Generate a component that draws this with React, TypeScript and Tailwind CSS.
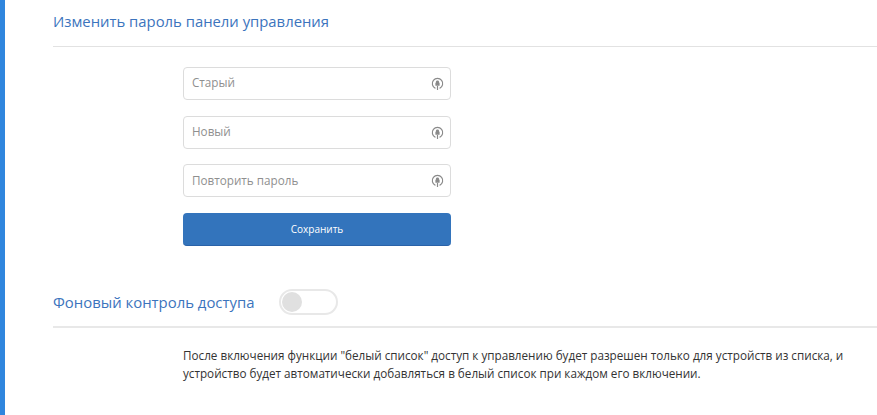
const fontFamily = "font-['Open_Sans','Noto_Sans',sans-serif]"

const LockIcon = () => (
  <svg className="h-[16px] w-[13px] text-[#8a8a8a]" viewBox="0 0 13 16" fill="none" aria-hidden>
    <path d="M4.4 12.4a5.2 5.2 0 1 1 4.2 0" stroke="currentColor" strokeWidth="1.2" />
    <path d="M6.5 4.6c-1 0-1.6.7-1.6 1.5v.7h-.5v3h4.2v-3h-.5v-.7c0-.8-.6-1.5-1.6-1.5z" fill="currentColor" />
    <path d="M6.5 10v4" stroke="currentColor" strokeWidth="1.2" />
  </svg>
)

const PasswordField = ({ placeholder, shift }: { placeholder: string; shift?: boolean }) => (
  <div className="flex h-[33px] w-[268px] items-center justify-between rounded-[4px] border border-[#dcdcdc] bg-white pr-[6px] pl-[8px]">
    <span className={shift ? 'text-[11.7px] text-[#8f8f8f]' : '-mt-[1px] text-[11.7px] text-[#8f8f8f]'}>{placeholder}</span>
    <LockIcon />
  </div>
)

export default function App() {
  return (
    <div className={`flex h-[415px] w-[877px] overflow-hidden bg-white ${fontFamily}`}>
      <div className="w-[5px] shrink-0 bg-[#2f86de]" />
      <div className="flex-1 pl-[48px]">
        <div className="h-[47px] border-b border-[#e2e2e2] pt-[10px]">
          <h2 className="text-[14.85px] leading-[22px] font-normal text-[#3c74bd]">Изменить пароль панели управления</h2>
        </div>

        <div className="mt-[20px] ml-[130px] flex w-[268px] flex-col">
          <PasswordField placeholder="Старый" />
          <div className="mt-[16px]">
            <PasswordField placeholder="Новый" />
          </div>
          <div className="mt-[15px]">
            <PasswordField placeholder="Повторить пароль" shift />
          </div>
          <button
            type="button"
            className="mt-[16px] h-[33px] w-[268px] rounded-[4px] border-b border-[#2a62a8] bg-[#3374bc] pt-[1px] text-[10px] font-normal text-white"
          >
            Сохранить
          </button>
        </div>

        <div className="mt-[43px] flex h-[39px] items-start border-b-2 border-[#e8e8e8]">
          <h2 className="mt-[1px] text-[14.9px] leading-[24px] font-normal text-[#3c74bd]">Фоновый контроль доступа</h2>
          <div className="ml-[25px] flex h-[26px] w-[59px] items-center rounded-full border-2 border-[#e8e8e8] bg-white pl-[1px]">
            <span className="h-[20px] w-[20px] rounded-full bg-[#e0e0e0]" />
          </div>
        </div>

        <p className="mt-[18px] ml-[130px] w-[680px] text-[11.7px] leading-[18px] text-[#333333]">
          После включения функции "белый список" доступ к управлению будет разрешен только для устройств из списка, и устройство будет автоматически добавляться в белый список при каждом его включении.
        </p>
      </div>
    </div>
  )
}
